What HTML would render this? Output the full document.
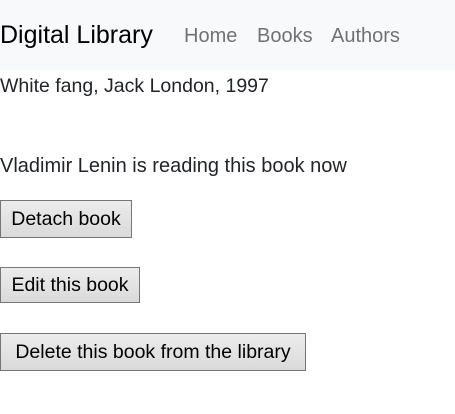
<!DOCTYPE html>
<html><head><meta charset="utf-8"><style>
body{margin:0;width:455px;height:414px;background:#fff;font-family:"Liberation Sans",sans-serif;color:#212529;position:relative;overflow:hidden}
.nav{position:absolute;left:0;top:0;width:455px;height:70px;background:#f8f9fa}
.a{position:absolute;white-space:nowrap}
.brand{left:0;top:21px;font-size:25px;color:#000}
.l{top:25px;font-size:20px;color:rgba(0,0,0,.55)}
.t{left:0;font-size:19.5px}
.b{position:absolute;left:0;box-sizing:border-box;border:1px solid #767676;background:linear-gradient(#ececec,#dadada);font-size:19.5px;color:#000;display:flex;align-items:center;justify-content:center;white-space:nowrap;padding:0}
</style></head><body>
<div class="nav"></div>
<div class="a brand">Digital Library</div>
<div class="a l" style="left:184px">Home</div>
<div class="a l" style="left:257px">Books</div>
<div class="a l" style="left:331px">Authors</div>
<div class="a t" style="top:75px">White fang, Jack London, 1997</div>
<div class="a t" style="top:155px;font-size:20px">Vladimir Lenin is reading this book now</div>
<div class="b" style="top:200px;width:132px;height:38px">Detach book</div>
<div class="b" style="top:267px;width:140px;height:36px">Edit this book</div>
<div class="b" style="top:333px;width:306px;height:38px">Delete this book from the library</div>
</body></html>
